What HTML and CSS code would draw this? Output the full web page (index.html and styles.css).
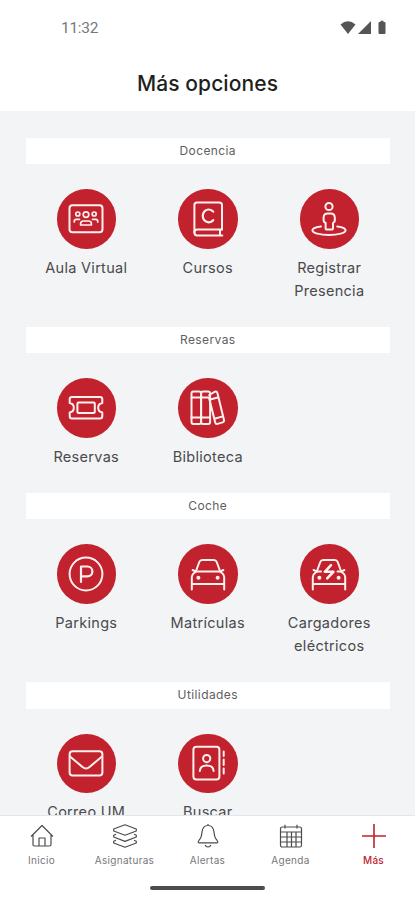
FILE: index.html
```
<!DOCTYPE html>
<html lang="es">
<head>
    <meta charset="UTF-8">
    <meta name="viewport" content="width=device-width, initial-scale=1.0">
    <title>Más opciones</title>
    <link rel="stylesheet" href="styles.css">
</head>
<body>
    <div class="app">
        <div class="status-bar">
            <span class="clock">11:32</span>
            <svg class="status-icons" width="48" height="16" viewBox="0 0 48 16">
                <path d="M0.5 4.5Q8 -2 15.5 4.5L8 14Z"/>
                <path d="M31 1V14H18Z"/>
                <path d="M38.5 3Q38.5 2 39.5 2H40.5V0.7H43.5V2H44.5Q45.5 2 45.5 3V13Q45.5 14 44.5 14H39.5Q38.5 14 38.5 13Z"/>
            </svg>
        </div>
        <header class="header">
            <h1>Más opciones</h1>
        </header>

        <main class="content">
            <section class="section">
                <h2>Docencia</h2>
                <div class="options">
                    <a class="option">
                        <span class="circle">
                            <svg class="icon" viewBox="0 0 36 36">
                                <rect x="1.5" y="4.3" width="33" height="27" rx="3"/>
                                <g class="thin">
                                    <circle cx="9.8" cy="13" r="2"/>
                                    <circle cx="26.2" cy="13" r="2"/>
                                    <circle cx="18" cy="13.6" r="2.8"/>
                                    <path d="M6.3 21V20Q6.3 18.3 8.1 18.3H11.5M29.7 21V20Q29.7 18.3 27.9 18.3H24.5"/>
                                    <path d="M12.6 24V22.8Q12.6 20 15.4 20H20.6Q23.4 20 23.4 22.8V24Z"/>
                                </g>
                            </svg>
                        </span>
                        <span class="label">Aula Virtual</span>
                    </a>
                    <a class="option">
                        <span class="circle">
                            <svg class="icon" viewBox="0 0 36 36">
                                <path d="M32 28.6H7.2Q4.4 28.6 4.4 31.5T7.2 34.4H32.3M30 28.6V34.4"/>
                                <path d="M4.4 31.5V4Q4.4 1.4 7 1.4H29.4Q32 1.4 32 4V28.6"/>
                                <path d="M23.2 10.6A6 6.4 0 1 0 23.2 19.2" class="bold"/>
                            </svg>
                        </span>
                        <span class="label">Cursos</span>
                    </a>
                    <a class="option">
                        <span class="circle">
                            <svg class="icon" viewBox="0 0 36 36">
                                <circle cx="18" cy="5.5" r="3.6"/>
                                <path d="M17 12.4H19.5Q23.8 12.4 23.8 16.7V19.5Q23.8 21 22 22V27Q22 28.6 20.4 28.6H16.2Q14.6 28.6 14.6 27V22Q12.6 21 12.6 19.5V16.7Q12.6 12.4 17 12.4Z"/>
                                <path d="M10 25.4C4 26.2 1.4 27.6 1.4 29.2C1.4 32 9 34 18 34S34.6 32 34.6 29.2C34.6 27.6 32 26.2 26.2 25.4"/>
                            </svg>
                        </span>
                        <span class="label">Registrar Presencia</span>
                    </a>
                </div>
            </section>

            <section class="section">
                <h2>Reservas</h2>
                <div class="options">
                    <a class="option">
                        <span class="circle">
                            <svg class="icon" viewBox="0 0 36 36">
                                <path d="M4 7H32Q34.3 7 34.3 9.3V13A4.8 4.8 0 0 0 34.3 22.5V26Q34.3 28.5 32 28.5H4Q1.7 28.5 1.7 26V22.5A4.8 4.8 0 0 0 1.7 13V9.3Q1.7 7 4 7Z"/>
                                <rect x="9.4" y="12.6" width="17.4" height="10.4" rx="1.2"/>
                            </svg>
                        </span>
                        <span class="label">Reservas</span>
                    </a>
                    <a class="option">
                        <span class="circle">
                            <svg class="icon" viewBox="0 0 36 36">
                                <rect x="1.5" y="1.5" width="9.6" height="32.5" rx="2"/>
                                <rect x="11.1" y="1.5" width="9" height="32.5" rx="2"/>
                                <path d="M1.5 7.5H20M1.5 27.5H20"/>
                                <path d="M19.2 5L25 1.7Q26.8 1.2 27.4 3L34 30Q34.4 31.7 32.6 32.4L27.5 33.9Q25.7 34.2 25.2 32.4L19.2 8.5M20.4 9.5L28.5 7.2M24.5 28.8L32.8 26.4"/>
                            </svg>
                        </span>
                        <span class="label">Biblioteca</span>
                    </a>
                </div>
            </section>

            <section class="section">
                <h2>Coche</h2>
                <div class="options">
                    <a class="option">
                        <span class="circle">
                            <svg class="icon" viewBox="0 0 36 36">
                                <circle cx="18" cy="18" r="16.4"/>
                                <path d="M13 26V10.5H19.5A4.9 4.9 0 0 1 19.5 20.3H13" class="bold"/>
                            </svg>
                        </span>
                        <span class="label">Parkings</span>
                    </a>
                    <a class="option">
                        <span class="circle">
                            <svg class="icon" viewBox="0 0 36 36">
                                <path d="M1.8 33.5V21Q1.8 18.5 4 17L6.4 15.5H29.6L32 17Q34.2 18.5 34.2 21V33.5M1.8 28H34.2"/>
                                <path d="M5.8 15.5L9.3 6Q10 4 12.3 4H23.7Q26 4 26.7 6L30.2 15.5M2.6 14L5.5 15.3M33.4 14L30.5 15.3"/>
                                <circle class="dot" cx="8.4" cy="21.8" r="2"/>
                                <circle class="dot" cx="27.6" cy="21.8" r="2"/>
                            </svg>
                        </span>
                        <span class="label">Matrículas</span>
                    </a>
                    <a class="option">
                        <span class="circle">
                            <svg class="icon" viewBox="0 0 36 36">
                                <path d="M1.8 33.5V21Q1.8 18.5 4 17L6.4 15.5H10M26.5 15.5H29.6L32 17Q34.2 18.5 34.2 21V33.5M1.8 28H34.2"/>
                                <path d="M5.8 15.5L9.3 6Q10 4 12.3 4H23.7Q26 4 26.7 6L30.2 15.5M2.6 14L5.5 15.3M33.4 14L30.5 15.3"/>
                                <path d="M20 9.2L13.8 15.8H22.4L16.2 22.4" class="bolt"/>
                                <circle class="dot" cx="8.4" cy="21.8" r="2"/>
                                <circle class="dot" cx="27.6" cy="21.8" r="2"/>
                            </svg>
                        </span>
                        <span class="label">Cargadores eléctricos</span>
                    </a>
                </div>
            </section>

            <section class="section">
                <h2>Utilidades</h2>
                <div class="options">
                    <a class="option">
                        <span class="circle">
                            <svg class="icon" viewBox="0 0 36 36">
                                <rect x="1.6" y="6.2" width="32.8" height="24.2" rx="3"/>
                                <path d="M2 11.5L14.5 22Q18 25 21.5 22L34 11.5"/>
                            </svg>
                        </span>
                        <span class="label">Correo UM</span>
                    </a>
                    <a class="option">
                        <span class="circle">
                            <svg class="icon" viewBox="0 0 36 36">
                                <rect x="3.4" y="1.8" width="26" height="32.6" rx="3"/>
                                <circle cx="16.7" cy="13.6" r="3.6"/>
                                <path d="M9.8 26Q10.3 20.6 16.7 20.6T23.6 26"/>
                                <path d="M33.7 6.5V11M33.7 14.5V20M33.7 23.5V28.5"/>
                            </svg>
                        </span>
                        <span class="label">Buscar</span>
                    </a>
                </div>
            </section>
        </main>

        <nav class="tabs">
            <a class="tab">
                <svg viewBox="0 0 24 24"><path d="M1 12.5L12 1.5L23 12.5M3 10.8V20.5Q3 22 4.5 22H19.5Q21 22 21 20.5V10.8M9 22V14H15V22"/></svg>
                <span>Inicio</span>
            </a>
            <a class="tab">
                <svg viewBox="0 0 24 24"><path d="M12 .8L23.3 5V7L12 11.2L.7 7V5ZM3 10.2L.7 11.2V13L12 17.4L23.3 13V11.2L21 10.2M3 16.2L.7 17.2V19L12 23.3L23.3 19V17.2L21 16.2"/></svg>
                <span>Asignaturas</span>
            </a>
            <a class="tab">
                <svg viewBox="0 0 24 24"><path d="M12 1.5Q17.2 1.5 18 8Q18.4 13.5 20.8 16Q22.8 18.9 20.6 18.9H3.4Q1.2 18.9 3.2 16Q5.6 13.5 6 8Q6.8 1.5 12 1.5ZM9.2 21Q9.8 23 12 23T14.8 21M12 0V1.5"/></svg>
                <span>Alertas</span>
            </a>
            <a class="tab">
                <svg viewBox="0 0 24 24"><rect x="1.5" y="3" width="21" height="20" rx="1.8"/><path d="M1.5 8H22.5M1.5 13H22.5M1.5 18H22.5M8 8V23M12.5 8V23M17 8V23M6 .8V4.5M18 .8V4.5"/></svg>
                <span>Agenda</span>
            </a>
            <a class="tab active">
                <svg viewBox="0 0 24 24"><path d="M12 0V24M0 12H24"/></svg>
                <span>Más</span>
            </a>
        </nav>
        <div class="gesture-bar"><span></span></div>
    </div>
</body>
</html>
```

FILE: styles.css
```
* {
    box-sizing: border-box;
}
body {
    margin: 0;
    font-family: Inter, Roboto, sans-serif;
    background: #fff;
    color: #4a4a4c;
}
.app {
    display: flex;
    flex-direction: column;
    height: 900px;
    overflow: hidden;
}
.status-bar {
    display: flex;
    justify-content: space-between;
    align-items: center;
    height: 56px;
    padding: 0 27px 0 61px;
}
.clock {
    font-family: Roboto, sans-serif;
    font-size: 15.5px;
    letter-spacing: -0.3px;
    color: #77777a;
}
.status-icons {
    fill: #555557;
}
.header {
    height: 55px;
    text-align: center;
}
h1 {
    margin: 0;
    font-size: 21px;
    font-weight: 500;
    line-height: 55px;
    letter-spacing: 0.1px;
    color: #1f1f21;
}
.content {
    flex: 1;
    min-height: 0;
    overflow: hidden;
    padding: 26.5px 25px 0 25.5px;
    background: #f2f4f6;
}
.section {
    padding-bottom: 24.8px;
}
h2 {
    margin: 0 0 25px;
    height: 26.5px;
    line-height: 26px;
    background: #fff;
    font-size: 12px;
    font-weight: 400;
    letter-spacing: 0.4px;
    text-align: center;
    color: #606062;
}
.options {
    display: grid;
    grid-template-columns: repeat(3, 1fr);
}
.option {
    display: flex;
    flex-direction: column;
    align-items: center;
}
.circle {
    display: flex;
    align-items: center;
    justify-content: center;
    width: 59.5px;
    height: 59.5px;
    margin-bottom: 7.4px;
    border-radius: 50%;
    background: #c1222d;
}
.icon {
    width: 36px;
    height: 36px;
    fill: none;
    stroke: #fff0f0;
    stroke-width: 2;
    stroke-linecap: round;
    stroke-linejoin: round;
}
.thin {
    stroke-width: 1.7;
}
.bold {
    stroke-width: 2.2;
}
.bolt {
    stroke-width: 2.6;
}
.dot {
    fill: #fff0f0;
    stroke: none;
}
.label {
    width: 100px;
    font-size: 14.5px;
    line-height: 23px;
    letter-spacing: 0.3px;
    text-align: center;
}
.tabs {
    display: grid;
    grid-template-columns: repeat(5, 1fr);
    height: 61px;
    padding-top: 8px;
    border-top: 1px solid #e4e5e7;
    background: #fff;
}
.tab {
    display: flex;
    flex-direction: column;
    align-items: center;
    font-size: 10px;
    letter-spacing: 0.3px;
    line-height: 14px;
    color: #77777a;
}
.tab svg {
    width: 24px;
    height: 24px;
    margin-bottom: 5px;
    fill: none;
    stroke: #4c4c4e;
    stroke-width: 1.2;
    stroke-linejoin: round;
}
.tab.active {
    color: #c1222d;
    font-weight: 500;
}
.tab.active svg {
    stroke: #c1222d;
    stroke-width: 1.6;
}
.gesture-bar {
    display: flex;
    justify-content: center;
    height: 24px;
    padding-top: 10px;
}
.gesture-bar span {
    width: 115px;
    height: 4px;
    border-radius: 2px;
    background: #4c4c4e;
}
```
